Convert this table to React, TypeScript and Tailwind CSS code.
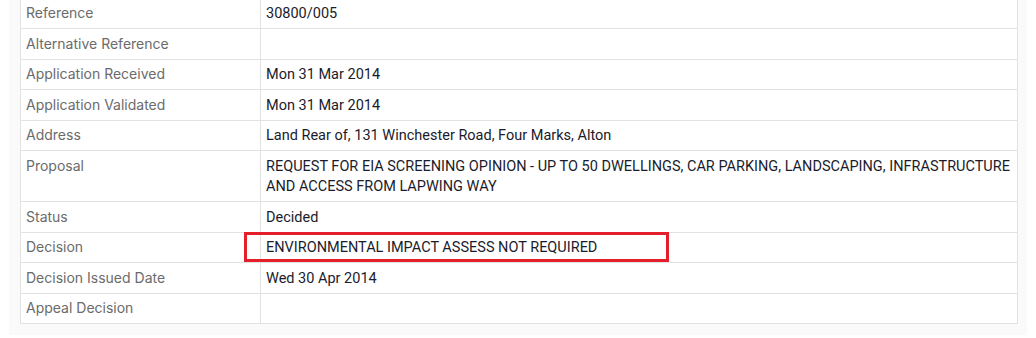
import React from "react";

type Row = { label: string; value: string; highlight?: boolean };

const rows: Row[] = [
  { label: "Reference", value: "30800/005" },
  { label: "Alternative Reference", value: "" },
  { label: "Application Received", value: "Mon 31 Mar 2014" },
  { label: "Application Validated", value: "Mon 31 Mar 2014" },
  { label: "Address", value: "Land Rear of, 131 Winchester Road, Four Marks, Alton" },
  {
    label: "Proposal",
    value:
      "REQUEST FOR EIA SCREENING OPINION - UP TO 50 DWELLINGS, CAR PARKING, LANDSCAPING, INFRASTRUCTURE AND ACCESS FROM LAPWING WAY",
  },
  { label: "Status", value: "Decided" },
  { label: "Decision", value: "ENVIRONMENTAL IMPACT ASSESS NOT REQUIRED", highlight: true },
  { label: "Decision Issued Date", value: "Wed 30 Apr 2014" },
  { label: "Appeal Decision", value: "" },
];

export default function App() {
  return (
    <div className="w-[1036px] h-[338px] overflow-hidden bg-white">
      <div className="ml-[9px] mr-[9px] mt-[-13.5px] bg-[#fafafa] p-[11px] pr-[9px]">
        <table className="w-full border-collapse border border-[#e2e2e2] bg-white leading-[20.5px]">
          <tbody>
            {rows.map((r) => (
              <tr key={r.label} className="border-b border-[#e2e2e2]">
                <td className="w-[240px] border-r border-[#e2e2e2] px-[5px] py-[4.5px] align-top font-['Inter',sans-serif] text-[14px] text-[#6b6b6b]">
                  {r.label}
                </td>
                <td className="relative px-[5px] pt-[5.5px] pb-[3.5px] align-top font-['Roboto',sans-serif] text-[14.5px] text-[#1b1b2b]">
                  {r.value}
                  {r.highlight && (
                    <span className="pointer-events-none absolute left-[-17px] top-[-0.5px] h-[30px] w-[425px] border-[3px] border-[#e41e2b]" />
                  )}
                </td>
              </tr>
            ))}
          </tbody>
        </table>
      </div>
    </div>
  );
}
